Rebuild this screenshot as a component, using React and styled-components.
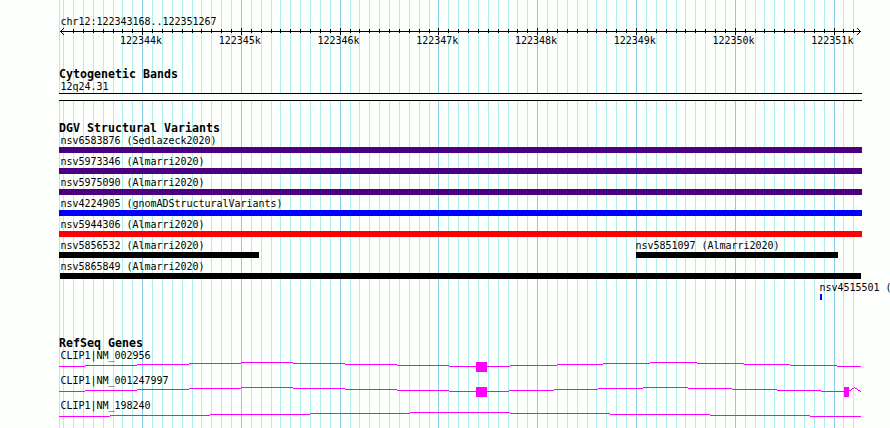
import React from "react";
import styled, { createGlobalStyle } from "styled-components";

const START = 122343168;
const PX_PER_BP = 800 / 8100;
const LEFT = 59;
const RIGHT = 862;

const toX = (bp) => Math.round(60 + (bp - START) * PX_PER_BP);

const ticks = [];
for (let bp = 122343200; bp <= 122351200; bp += 100) {
  ticks.push({ bp, x: toX(bp), major: bp % 1000 === 0 });
}
const majorTicks = ticks.filter((tick) => tick.major);

const variantRows = [
  [{ name: "nsv6583876 (Sedlazeck2020)", from: 59, to: 862, color: "#4b0082" }],
  [{ name: "nsv5973346 (Almarri2020)", from: 59, to: 862, color: "#4b0082" }],
  [{ name: "nsv5975090 (Almarri2020)", from: 59, to: 862, color: "#4b0082" }],
  [{ name: "nsv4224905 (gnomADStructuralVariants)", from: 59, to: 862, color: "#0000ff" }],
  [{ name: "nsv5944306 (Almarri2020)", from: 59, to: 862, color: "#ff0000" }],
  [
    { name: "nsv5856532 (Almarri2020)", from: 59, to: 259, color: "#000000" },
    { name: "nsv5851097 (Almarri2020)", from: 636, to: 838, color: "#000000", indent: -0.5 },
  ],
  [{ name: "nsv5865849 (Almarri2020)", from: 60, to: 861, color: "#000000", indent: 0.5 }],
  [{ name: "nsv4515501 (", from: 820, to: 822, color: "#0000ff", indent: -0.5 }],
];

// intron segments: [from, to, y], exons: [from, to]
const genes = [
  {
    name: "CLIP1|NM_002956",
    introns: [
      [59, 85, 4], [85, 137, 3], [137, 189, 2], [189, 241, 1], [241, 293, 0],
      [293, 345, 1], [345, 397, 2], [397, 449, 3], [449, 510, 4],
      [510, 557, 3], [557, 603, 2], [603, 650, 1], [650, 697, 0],
      [697, 744, 1], [744, 790, 2], [790, 837, 3], [837, 861, 4],
    ],
    exons: [[476, 487]],
  },
  {
    name: "CLIP1|NM_001247997",
    introns: [
      [59, 85, 4], [85, 137, 3], [137, 189, 2], [189, 241, 1], [241, 293, 0],
      [293, 345, 1], [345, 397, 2], [397, 449, 3], [449, 509, 4],
      [509, 554, 3], [554, 598, 2], [598, 643, 1], [643, 688, 0],
      [688, 732, 1], [732, 777, 2], [777, 821, 3], [821, 844, 4],
      [849, 851, 3], [851, 852, 2], [852, 854, 1], [854, 855, 0],
      [855, 857, 1], [857, 858, 2], [858, 860, 3], [860, 861, 4],
    ],
    exons: [[476, 487], [844, 849]],
  },
  {
    name: "CLIP1|NM_198240",
    introns: [
      [59, 110, 4], [110, 210, 3], [210, 310, 2], [310, 410, 1], [410, 510, 0],
      [510, 610, 1], [610, 710, 2], [710, 810, 3], [810, 861, 4],
    ],
    exons: [],
  },
];

const GlobalStyle = createGlobalStyle`
  body {
    margin: 0;
    background: #fdfffc;
  }
`;

const Browser = styled.main`
  position: relative;
  width: 890px;
  height: 428px;
  overflow: hidden;
  background: #fdfffc;
  color: #000;
  font: 10px/12px "DejaVu Sans Mono", "Liberation Mono", monospace;
  letter-spacing: -0.02px;
`;

const GridLines = styled.svg`
  position: absolute;
  top: 0;
  left: 0;
`;

const Content = styled.div`
  position: relative;
  display: flex;
  flex-direction: column;
  padding: 15px 0 0 ${LEFT}px;
`;

const Label = styled.div`
  height: 12px;
  line-height: 14px;
  text-indent: ${(props) => props.$indent ?? 1.5}px;
  white-space: pre;
`;

const Ruler = styled.svg`
  display: block;
  margin-left: -${LEFT}px;
`;

const TickLabels = styled.div`
  display: flex;
  gap: 56.77px;
  height: 12px;
  margin: 0 0 21px 61px;
`;

const TickLabel = styled.span`
  flex: none;
  width: 42px;
`;

const Track = styled.section`
  display: flex;
  flex-direction: column;
  height: ${(props) => props.$height}px;
`;

const TrackTitle = styled.h2`
  height: 12px;
  margin: 0;
  font-size: 11.6px;
  line-height: 12px;
  font-weight: bold;
  letter-spacing: 0.02px;
  white-space: pre;
`;

const Band = styled.div`
  box-sizing: border-box;
  width: ${RIGHT - LEFT}px;
  height: 8px;
  margin-top: 1px;
  border: solid #000;
  border-width: 1px 0;
  background: #fdfffc;
`;

const Lane = styled.div`
  display: flex;
  height: 21px;
`;

const Feature = styled.div`
  flex: none;
  width: ${(props) => props.$width}px;
  margin-left: ${(props) => props.$gap}px;
`;

const Bar = styled.div`
  height: 6px;
  margin-top: 1px;
  background: ${(props) => props.$color};
`;

const Gene = styled.div`
  height: 25px;
`;

const GeneModel = styled.svg`
  display: block;
  margin-left: -${LEFT}px;
`;

const VariantLane = ({ features }) => (
  <Lane>
    {features.map((feature, i) => {
      const previousEnd = i === 0 ? LEFT : features[i - 1].to;
      return (
        <Feature
          key={feature.name}
          $gap={feature.from - previousEnd}
          $width={feature.to - feature.from}
        >
          <Label $indent={feature.indent}>{feature.name}</Label>
          <Bar $color={feature.color} />
        </Feature>
      );
    })}
  </Lane>
);

const App = () => {
  return (
    <Browser>
      <GlobalStyle />
      <GridLines width="890" height="428" shapeRendering="crispEdges">
        <rect x={LEFT} y="0" width="1" height="428" fill="#afeeee" />
        {ticks.map(({ bp, x, major }) => (
          <rect key={bp} x={x} y="0" width="1" height="428" fill={major ? "#87ceeb" : "#afeeee"} />
        ))}
      </GridLines>
      <Content>
        <Label>chr12:122343168..122351267</Label>
        <Ruler width="890" height="8" shapeRendering="crispEdges">
          <rect x="60" y="4" width="801" height="1" />
          {ticks.slice(1).map(({ bp, x, major }) => (
            <rect key={bp} x={x} y={major ? 1 : 2} width="1" height={major ? 7 : 4} />
          ))}
          <path d="M61 3h1v1h-1zM62 2h1v1h-1zM63 1h1v1h-1zM61 5h1v1h-1zM62 6h1v1h-1zM63 7h1v1h-1z" />
          <path d="M859 3h1v1h-1zM858 2h1v1h-1zM857 1h1v1h-1zM859 5h1v1h-1zM858 6h1v1h-1zM857 7h1v1h-1z" />
        </Ruler>
        <TickLabels>
          {majorTicks.map(({ bp }) => (
            <TickLabel key={bp}>{bp / 1000}k</TickLabel>
          ))}
        </TickLabels>
        <Track $height={54}>
          <TrackTitle>Cytogenetic Bands</TrackTitle>
          <Label>12q24.31</Label>
          <Band />
        </Track>
        <Track $height={215}>
          <TrackTitle>DGV Structural Variants</TrackTitle>
          {variantRows.map((features) => (
            <VariantLane key={features[0].name} features={features} />
          ))}
        </Track>
        <Track $height={91}>
          <TrackTitle>RefSeq Genes</TrackTitle>
          {genes.map((gene) => (
            <Gene key={gene.name}>
              <Label>{gene.name}</Label>
              <GeneModel width="890" height="11" fill="#ff00ff" shapeRendering="crispEdges">
                {gene.introns.map(([from, to, y]) => (
                  <rect key={from} x={from} y={y + 1} width={to - from} height="1" />
                ))}
                {gene.exons.map(([from, to]) => (
                  <rect key={from} x={from} y="1" width={to - from} height="10" />
                ))}
              </GeneModel>
            </Gene>
          ))}
        </Track>
      </Content>
    </Browser>
  );
};

export default App;
